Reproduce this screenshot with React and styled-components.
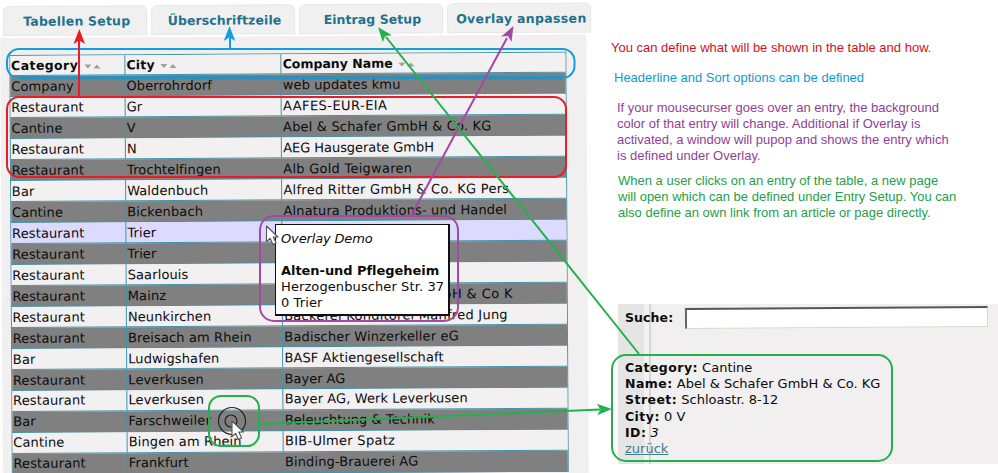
import React from "react";
import styled, { createGlobalStyle } from "styled-components";

const Global = createGlobalStyle`
  * { box-sizing: border-box; }
  html, body { margin: 0; padding: 0; background: #fff; overflow: hidden; }
  body { font-family: "DejaVu Sans", Verdana, sans-serif; font-size: 13px; color: #0c0c0c; }
`;

const Page = styled.div`
  position: relative;
  display: flex;
  width: 998px;
  height: 473px;
  overflow: hidden;
  background: #fff;
`;

const TablePane = styled.section`
  flex: none;
  width: 593px;
  height: 500px;
  padding-top: 6px;
  transform: rotate(-0.34deg);
  transform-origin: 0 0;
`;

const Tabs = styled.nav`
  display: flex;
  gap: 4px;
  padding-left: 3px;
  height: 30px;
`;

const Tab = styled.div`
  width: 144px;
  height: 30px;
  padding-left: ${(p) => p.$indent}px;
  border: 1px solid #e7e7e7;
  border-radius: 6px 6px 0 0;
  background: #f1f0f0;
  color: #21718f;
  font-weight: bold;
  font-size: 12.5px;
  line-height: 29px;
  white-space: nowrap;
  letter-spacing: ${(p) => p.$spacing}px;
`;

const Panel = styled.div`
  width: 586px;
  height: 480px;
  margin-top: 1.5px;
  padding: 17px 0 0 8.7px;
  background: #f1efef;
`;

const Table = styled.div`
  width: 557px;
  border: 1px solid #4194ab;
  border-bottom: 0;
`;

const Row = styled.div`
  display: grid;
  grid-template-columns: 114.3px 156.3px 1fr;
  height: 20.97px;
  background: ${(p) => p.$bg};
  border-bottom: 1px solid #4194ab;
`;

const Cell = styled.div`
  display: flex;
  align-items: center;
  gap: 6px;
  padding-left: 1px;
  border-left: ${(p) => (p.$first ? "0" : "1px solid #4194ab")};
  font-weight: ${(p) => (p.$head ? "bold" : "normal")};
  font-size: ${(p) => (p.$head ? "12.5px" : "13px")};
  letter-spacing: ${(p) => p.$spacing}px;
  line-height: 19px;
  white-space: pre;
  overflow: hidden;
`;

const SortIcon = styled.svg`
  width: 17px;
  height: 6px;
  margin-top: 3px;
  fill: #a09e9e;
`;

const Side = styled.aside`
  flex: none;
  width: 405px;
  padding: 40px 0 0 18px;
`;

const Note = styled.p`
  margin: 0 0 ${(p) => p.$after}px ${(p) => p.$indent}px;
  color: ${(p) => p.$color};
  font: 13px/16px "Liberation Sans", Arial, sans-serif;
  white-space: pre;
`;

const EntryCard = styled.div`
  width: 380px;
  height: 160px;
  margin: 83px 0 0 7px;
  padding: 3px 0 0 7px;
  background: linear-gradient(90deg, #e5e5e5 0 26px, #f3f2f2 26px 31px, #d5d4d5 31px 33px, #f1eff0 33px);
  white-space: nowrap;
`;

const Search = styled.label`
  display: flex;
  align-items: center;
  gap: 12px;
  height: 21px;
  font-weight: bold;
  font-size: 12.5px;
  letter-spacing: 0.1px;
`;

const SearchBox = styled.input`
  width: 303px;
  height: 21px;
  padding: 0;
  border: 1px solid #d8d6ce;
  border-top: 2px solid #555;
  border-left: 2px solid #666;
  background: #fff;
  transform: rotate(-0.34deg);
`;

const Details = styled.div`
  margin-top: 32px;
  line-height: 16.2px;
  b {
    font-size: 12.5px;
    letter-spacing: 0.45px;
  }
`;

const BackLink = styled.a`
  color: #417b8c;
  text-decoration: underline;
`;

const Popup = styled.div`
  position: absolute;
  left: 275px;
  top: 224px;
  width: 175px;
  height: 92px;
  padding: 6px 0 0 5px;
  border: 1px solid #111;
  border-right-width: 2px;
  border-bottom-width: 2px;
  background: #fff;
  line-height: 16.1px;
  white-space: nowrap;
`;

const PopupTitle = styled.div`
  margin-bottom: 16px;
  font-style: italic;
  letter-spacing: -0.15px;
`;

const PopupName = styled.div`
  font-weight: bold;
  letter-spacing: -0.05px;
`;

const PopupLine = styled.div`
  letter-spacing: 0.1px;
`;

const Annotations = styled.svg`
  position: absolute;
  left: 0;
  top: 0;
  pointer-events: none;
`;

const LIGHT = "#f2f0f0";
const DARK = "#808080";
const HOVER = "#dcdaff";

/* category, city, company name, letter spacing of the company name */
const entries = [
  ["Company", "Oberrohrdorf", "web updates kmu", 0.1],
  ["Restaurant", "Gr", "AAFES-EUR-EIA", 0.45],
  ["Cantine", "V", "Abel & Schafer GmbH & Co. KG", 0.17],
  ["Restaurant", "N", "AEG Hausgerate GmbH", -0.05],
  ["Restaurant", "Trochtelfingen", "Alb Gold Teigwaren", 0.25],
  ["Bar", "Waldenbuch", "Alfred Ritter GmbH & Co. KG Pers", 0.27],
  ["Cantine", "Bickenbach", "Alnatura Produktions- und Handel", 0.13],
  ["Restaurant", "Trier", ""],
  ["Restaurant", "Trier", ""],
  ["Restaurant", "Saarlouis", ""],
  ["Restaurant", "Mainz", "Automaten Service GmbH & Co K", 0.4],
  ["Restaurant", "Neunkirchen", "Backerei Konditorei Manfred Jung", 0.25],
  ["Restaurant", "Breisach am Rhein", "Badischer Winzerkeller eG", 0.15],
  ["Bar", "Ludwigshafen", "BASF Aktiengesellschaft", 0.1],
  ["Restaurant", "Leverkusen", "Bayer AG", 0],
  ["Restaurant", "Leverkusen", "Bayer AG, Werk Leverkusen", 0.1],
  ["Bar", "Farschweiler", "Beleuchtung & Technik", 0.05],
  ["Cantine", "Bingen am Rhein", "BIB-Ulmer Spatz", 0.28],
  ["Restaurant", "Frankfurt", "Binding-Brauerei AG", 0.1],
];

const rowColor = (i) => (i === 7 ? HOVER : i % 2 ? LIGHT : DARK);

const HeadCell = ({ first, spacing, children }) => (
  <Cell $head $first={first} $spacing={spacing}>
    {children}
    <SortIcon viewBox="0 0 17 6">
      <path d="M0 1h7L3.500 5zM9 5h7L12.500 1z" />
    </SortIcon>
  </Cell>
);

const Pointer = ({ x, y }) => (
  <path
    transform={`translate(${x} ${y})`}
    d="M0 0V15.500L3.600 12.300L6.500 18.500L9.600 17L6.800 11H11.500Z"
    fill="#fff"
    stroke="#555"
    strokeWidth="1.1"
    strokeLinejoin="round"
  />
);

const ArrowHead = ({ x, y, angle, color }) => (
  <path
    transform={`translate(${x} ${y}) rotate(${angle})`}
    d="M0 0L-15 -5.800L-11.500 0L-15 5.800Z"
    fill={color}
  />
);

const RED = "#ea1d27";
const BLUE = "#109fe0";
const GREEN = "#22b14c";
const PURPLE = "#a349a4";

export default function App() {
  return (
    <Page>
      <Global />
      <TablePane>
        <Tabs>
          <Tab $indent={19} $spacing={0.2}>Tabellen Setup</Tab>
          <Tab $indent={15.5} $spacing={0.1}>Überschriftzeile</Tab>
          <Tab $indent={23.5} $spacing={0.05}>Eintrag Setup</Tab>
          <Tab $indent={8} $spacing={0.33}>Overlay anpassen</Tab>
        </Tabs>
        <Panel>
          <Table>
            <Row $bg={LIGHT}>
              <HeadCell first spacing={0.4}>Category</HeadCell>
              <HeadCell spacing={0.2}>City</HeadCell>
              <HeadCell spacing={0}>Company Name</HeadCell>
            </Row>
            {entries.map(([category, city, name, spacing = 0], i) => (
              <Row key={i} $bg={rowColor(i)}>
                <Cell $first $spacing={0.12}>{category}</Cell>
                <Cell $spacing={0.12}>{city}</Cell>
                <Cell $spacing={spacing}>{name}</Cell>
              </Row>
            ))}
          </Table>
        </Panel>
      </TablePane>

      <Side>
        <Note $color="#d40f1c" $indent={0} $after={14}>You can define what will be shown in the table and how.</Note>
        <Note $color="#0f9bc8" $indent={3} $after={14}>Headerline and Sort options can be defined</Note>
        <Note $color="#8f3f96" $indent={6} $after={9}>
          {"If your mousecurser goes over an entry, the background\ncolor of that entry will change. Additional if Overlay is\nactivated, a window will pupop and shows the entry which\nis defined under Overlay."}
        </Note>
        <Note $color="#25a04a" $indent={7} $after={0}>
          {"When a user clicks on an entry of the table, a new page\nwill open which can be defined under Entry Setup. You can\nalso define an own link from an article or page directly."}
        </Note>
        <EntryCard>
          <Search>
            Suche:
            <SearchBox aria-label="Suche" />
          </Search>
          <Details>
            <div><b>Category:</b> Cantine</div>
            <div><b>Name:</b> Abel &amp; Schafer GmbH &amp; Co. KG</div>
            <div><b>Street:</b> Schloastr. 8-12</div>
            <div><b>City:</b> 0 V</div>
            <div><b>ID:</b> <i>3</i></div>
            <BackLink>zurück</BackLink>
          </Details>
        </EntryCard>
      </Side>

      <Popup>
        <PopupTitle>Overlay Demo</PopupTitle>
        <PopupName>Alten-und Pflegeheim</PopupName>
        <PopupLine>Herzogenbuscher Str. 37</PopupLine>
        <PopupLine>0 Trier</PopupLine>
      </Popup>

      <Annotations width="998" height="473" viewBox="0 0 998 473" fill="none" strokeWidth="2">
        <rect x="7" y="49" width="567.500" height="29" rx="12" stroke={BLUE} />
        <path d="M20 77.700H563" stroke="#2f8fbc" strokeWidth="3.500" />
        <path d="M230 48V38" stroke={BLUE} />
        <ArrowHead x={229.500} y={26} angle={-90} color={BLUE} />

        <rect x="7" y="97" width="559" height="80" rx="12" stroke={RED} />
        <path d="M79 96V38" stroke={RED} />
        <ArrowHead x={79.300} y={29} angle={-90} color={RED} />

        <rect x="260" y="216" width="198" height="105" rx="14" stroke={PURPLE} />
        <path d="M411 216L507 38" stroke={PURPLE} />
        <ArrowHead x={513.500} y={26} angle={-61.500} color={PURPLE} />

        <path d="M639 354L386 37" stroke={GREEN} />
        <ArrowHead x={378} y={27} angle={231.500} color={GREEN} />
        <rect x="612" y="355" width="280" height="106" rx="14" stroke={GREEN} />
        <rect x="209" y="396" width="50" height="50" rx="12" stroke={GREEN} />
        <path d="M260 424L600 409.500" stroke={GREEN} />
        <ArrowHead x={612} y={409} angle={-2} color={GREEN} />

        <circle cx="232" cy="421" r="13.500" stroke="#222" strokeWidth="1.2" />
        <circle cx="231" cy="421" r="6" stroke="#222" strokeWidth="1.2" />
        <Pointer x={232} y={421} />
        <Pointer x={266.500} y={226} />
      </Annotations>
    </Page>
  );
}
